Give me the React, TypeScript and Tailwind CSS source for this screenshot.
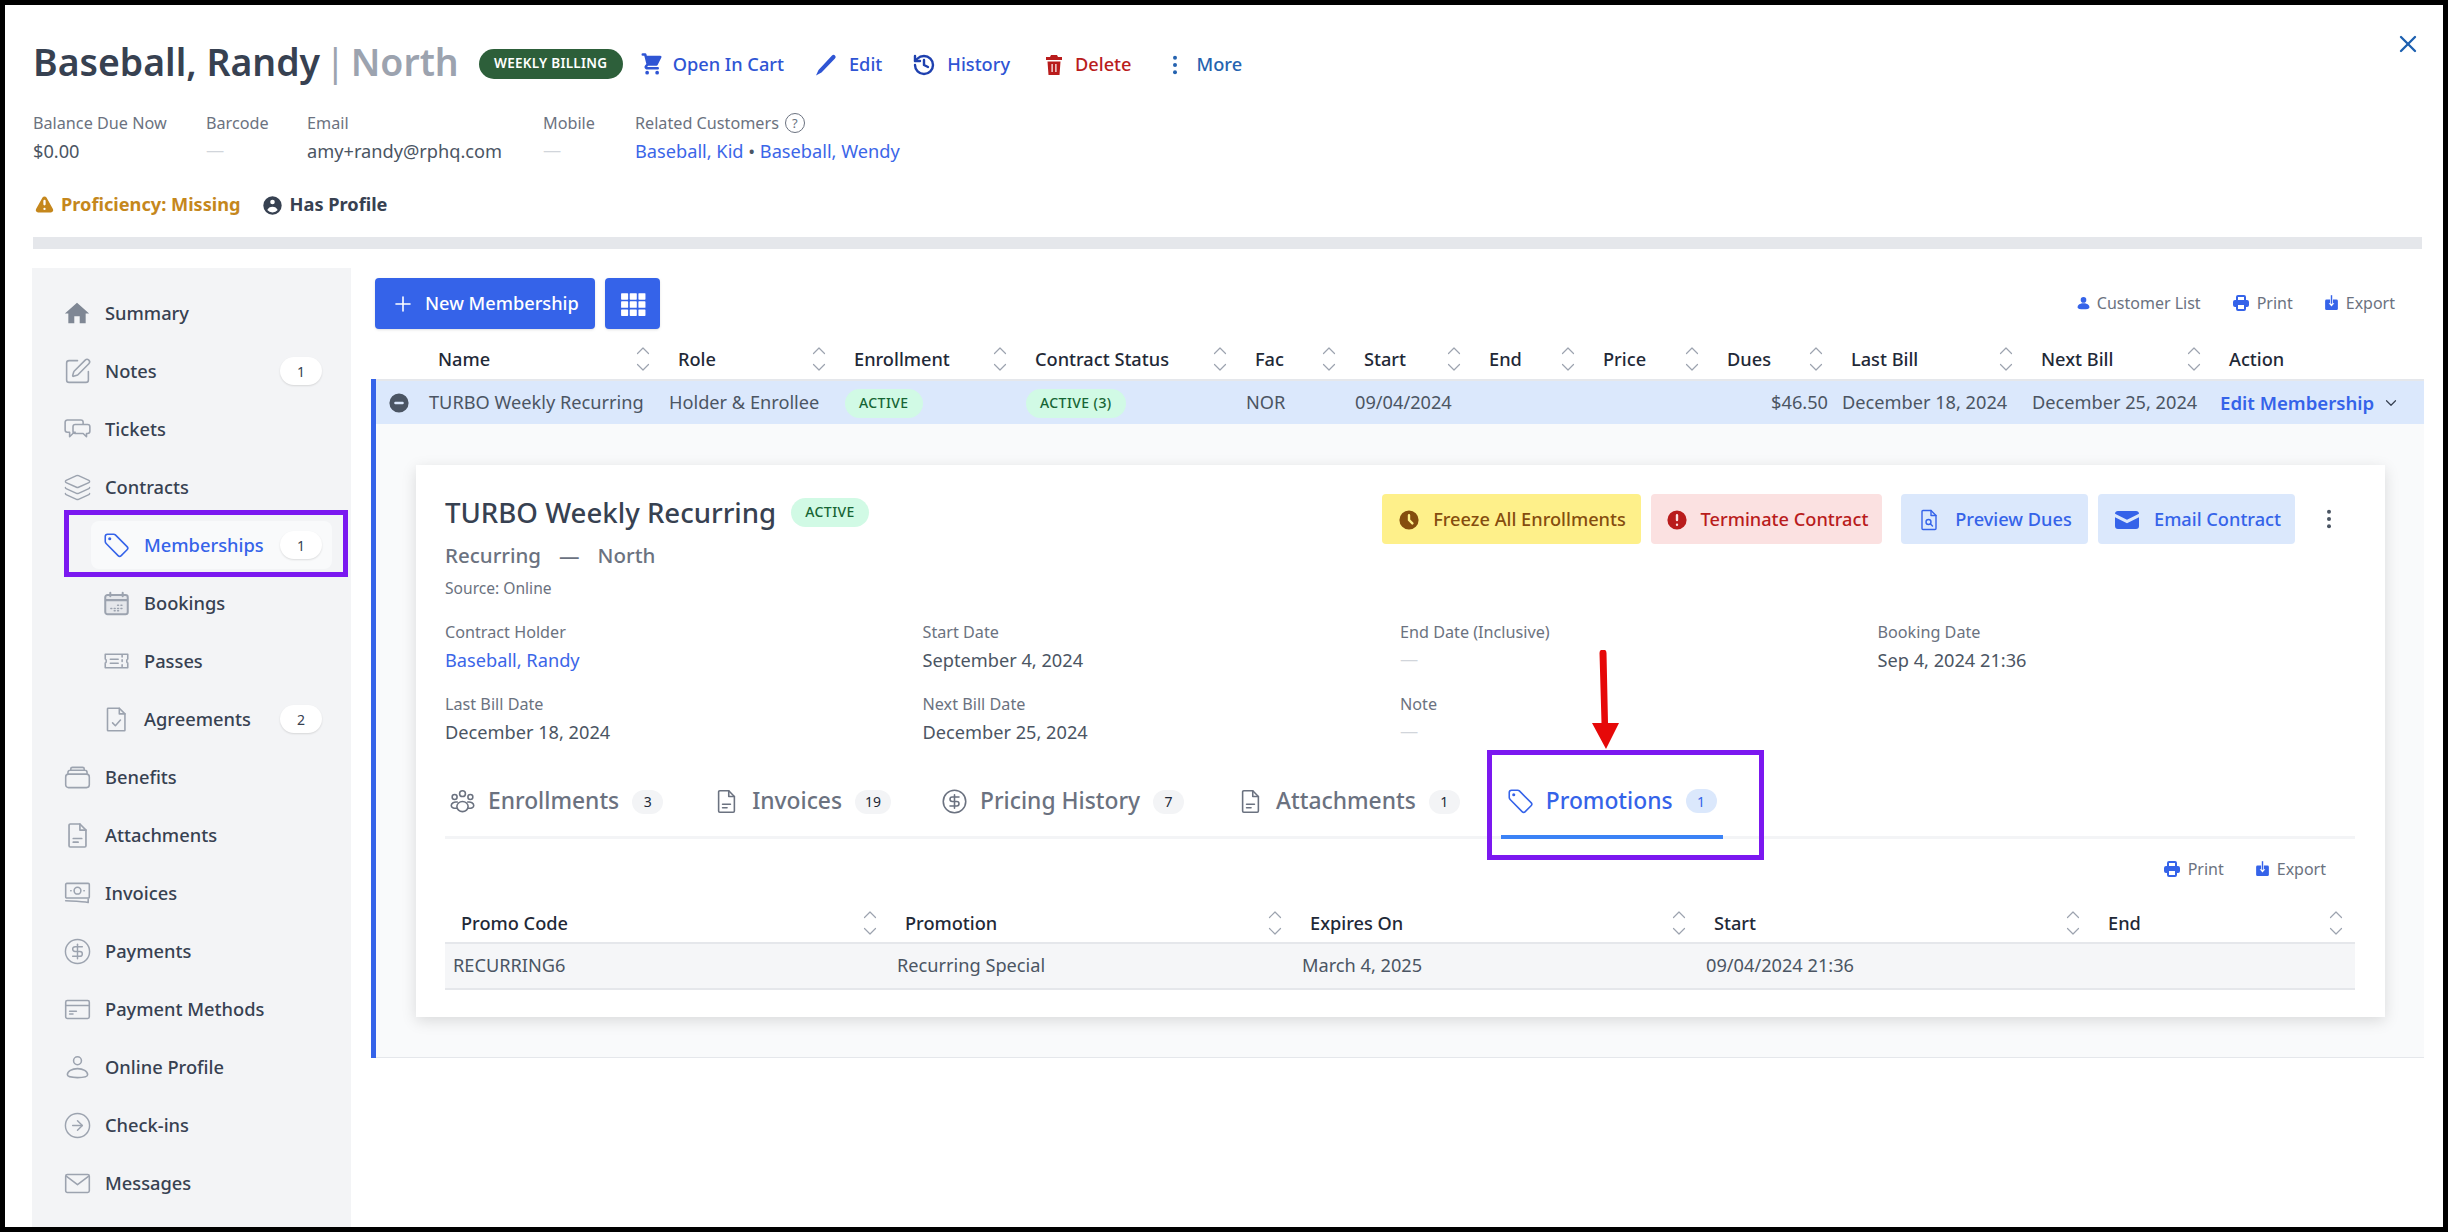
import React from "react";
import { HiShoppingCart, HiClock, HiExclamationCircle, HiMail, HiPrinter, HiExclamation, HiUserCircle, HiMinusCircle } from "react-icons/hi";
import { History, Plus, X, ChevronDown, SquarePen, Layers, CircleDollarSign, CircleArrowRight } from "lucide-react";

type IP = { children: React.ReactNode; className?: string; vb?: string };
const Ico = ({ children, className = "w-[27px] h-[27px]", vb = "0 0 24 24" }: IP) => (
  <svg viewBox={vb} fill="none" stroke="currentColor" strokeWidth={1.4} strokeLinecap="round" strokeLinejoin="round" className={className}>
    {children}
  </svg>
);

const TagIcon = ({ className }: { className?: string }) => (
  <Ico className={className}>
    <path d="M4 2h5.500c.6 0 1.100.2 1.500.6l10.400 10.400c.8.8.8 2 0 2.800l-5.200 5.200c-.8.8-2 .8-2.800 0L3 10.500c-.6-.6-1-1.300-1-2V4a2 2 0 0 1 2-2z" />
    <circle cx="6" cy="6" r=".7" fill="currentColor" />
  </Ico>
);
const FileLines = ({ className }: { className?: string }) => (
  <Ico className={className}>
    <path d="M6 2.500h8l5 5v13a1 1 0 0 1-1 1H6a1 1 0 0 1-1-1v-17a1 1 0 0 1 1-1z" />
    <path d="M14 2.500v5h5M8.500 14.500h7M8.500 17.500h4" />
  </Ico>
);
const Users3 = ({ className }: { className?: string }) => (
  <Ico className={className}>
    <circle cx="12" cy="5" r="2.600" />
    <circle cx="5" cy="8" r="2.200" />
    <circle cx="19" cy="8" r="2.200" />
    <ellipse cx="12" cy="16.500" rx="5" ry="4.500" />
    <path d="M7.300 12.500C4.500 12 2 13.500 2 15.500c0 1.800 2 2.800 5 2.500M16.700 12.500c2.800-.5 5.300 1 5.300 3 0 1.800-2 2.800-5 2.500" />
  </Ico>
);
const ExportIcon = ({ className }: { className?: string }) => (
  <svg viewBox="0 0 24 24" className={className} fill="currentColor">
    <path d="M5 7h5v5.500H8l4 4.500 4-4.500h-2V7h5a2 2 0 0 1 2 2v11a2 2 0 0 1-2 2H5a2 2 0 0 1-2-2V9a2 2 0 0 1 2-2z" />
    <rect x="11" y="1" width="2" height="12" />
  </svg>
);
const PersonIcon = ({ className }: { className?: string }) => (
  <svg viewBox="0 0 24 24" className={className} fill="currentColor">
    <circle cx="12" cy="7" r="4.500" />
    <path d="M2.500 19c0-4 4-6.500 9.500-6.500s9.500 2.500 9.500 6.500c0 2-4 3-9.500 3s-9.500-1-9.500-3z" />
  </svg>
);
const Sort = () => (
  <svg viewBox="0 0 16 26" className="w-[16px] h-[26px] shrink-0 text-[#9ca3af]" fill="none" stroke="currentColor" strokeWidth="1.200" strokeLinecap="round" strokeLinejoin="round">
    <path d="M2.500 7.500L8 2l5.500 5.500M2.500 18.500L8 24l5.500-5.500" />
  </svg>
);

const big = "w-[29px] h-[29px]";
const sideIcons: Record<string, React.ReactNode> = {
  Summary: (
    <svg viewBox="0 0 24 24" className="w-[26px] h-[26px]" fill="currentColor">
      <path d="M12 2.500L.8 12.500H4V21.500h5.500V15h5v6.500H20V12.500h3.200z" />
    </svg>
  ),
  Notes: <SquarePen className={big} strokeWidth={1.3} />,
  Tickets: (
    <Ico>
      <path d="M3 3.500h12a2 2 0 0 1 2 2v1.500M3 3.500a2 2 0 0 0-2 2v7a2 2 0 0 0 2 2h2v4l4-4h1" />
      <path d="M10 7.500h11a2 2 0 0 1 2 2v4a2 2 0 0 1-2 2h-1v3l-3-3h-7a2 2 0 0 1-2-2v-4a2 2 0 0 1 2-2z" />
    </Ico>
  ),
  Contracts: <Layers className={big} strokeWidth={1.2} />,
  Memberships: <TagIcon className="w-[27px] h-[27px]" />,
  Bookings: (
    <Ico>
      <rect x="2" y="4.500" width="20" height="17" rx="2" fill="#e5e7eb" strokeWidth={1.8} />
      <path d="M2.500 9h19M6.500 2.500v3M17.500 2.500v3" strokeWidth={1.8} />
      <path d="M7 16.500h.8M10 16.500h.8M13 16.500h.8M16 16.500h.8M13 13.500h.8M16 13.500h.8M10 18.500h.8M13 18.500h.8" />
    </Ico>
  ),
  Passes: (
    <Ico>
      <path d="M2 5.500h20v4.200c-1.200.3-1.200 3.300 0 3.600v4.200H2v-4.200c1.200-.3 1.200-3.300 0-3.600z" />
      <path d="M6.500 10h7M6.500 13.500h7M17 6.500v1.500M17 10.500v1.500M17 15v1.500" />
    </Ico>
  ),
  Agreements: (
    <Ico>
      <path d="M4.500 2h10l5 5v14.500a.5.500 0 0 1-.5.500H4.500a.5.500 0 0 1-.5-.5v-19a.5.500 0 0 1 .5-.5z" />
      <path d="M14.500 2v5h5M8.500 15l2.500 2.500 4.500-5" />
    </Ico>
  ),
  Benefits: (
    <Ico>
      <rect x="1.500" y="9" width="21" height="12" rx="2.500" />
      <path d="M3.500 9V7.500a2 2 0 0 1 2-2h13a2 2 0 0 1 2 2V9M6 5.500V4.500a1.500 1.500 0 0 1 1.500-1.500h9a1.500 1.500 0 0 1 1.500 1.500v1" />
    </Ico>
  ),
  Attachments: <FileLines className={big} />,
  Invoices: (
    <Ico>
      <rect x="1.500" y="3" width="21" height="13" rx="1" />
      <circle cx="12" cy="9.500" r="3" />
      <path d="M6 9.500h.3M17.700 9.500h.3M1.500 18.500c5 .3 15 .5 20 1.500v-3" />
    </Ico>
  ),
  Payments: <CircleDollarSign className={big} strokeWidth={1.2} />,
  "Payment Methods": (
    <Ico>
      <rect x="1.500" y="4" width="21" height="16" rx="1.500" />
      <path d="M1.500 8.500h21M5 13.500h6M5 16h3" />
    </Ico>
  ),
  "Online Profile": (
    <Ico>
      <circle cx="12" cy="6" r="3.500" />
      <path d="M3 18.500c0-3 4-5.500 9-5.500s9 2.500 9 5.500c0 1.500-4 2.500-9 2.500s-9-1-9-2.500z" />
    </Ico>
  ),
  "Check-ins": <CircleArrowRight className={big} strokeWidth={1.2} />,
  Messages: (
    <Ico>
      <rect x="1.500" y="4" width="21" height="16" rx="1.500" />
      <path d="M2 5.500l10 7.500 10-7.500" />
    </Ico>
  ),
};

const sideItems: { label: string; sub?: boolean; badge?: string; active?: boolean }[] = [
  { label: "Summary" },
  { label: "Notes", badge: "1" },
  { label: "Tickets" },
  { label: "Contracts" },
  { label: "Memberships", sub: true, badge: "1", active: true },
  { label: "Bookings", sub: true },
  { label: "Passes", sub: true },
  { label: "Agreements", sub: true, badge: "2" },
  { label: "Benefits" },
  { label: "Attachments" },
  { label: "Invoices" },
  { label: "Payments" },
  { label: "Payment Methods" },
  { label: "Online Profile" },
  { label: "Check-ins" },
  { label: "Messages" },
];

const Pill = ({ children }: { children: React.ReactNode }) => (
  <span className="h-[29px] px-[14px] inline-flex items-center rounded-full bg-[#d1fae5] text-[#166534] text-[14px] font-medium tracking-[0.03em] uppercase leading-none whitespace-nowrap">{children}</span>
);

const Field = ({ label, value, link, dash }: { label: string; value?: string; link?: boolean; dash?: boolean }) => (
  <div>
    <div className="text-[16.2px] leading-[24px] text-[#6b7280]">{label}</div>
    {dash ? (
      <div className="mt-[2px] h-[28px] flex items-center text-[#d1d5db] text-[18.2px]">—</div>
    ) : (
      <div className={"mt-[2px] text-[18.2px] leading-[28px] " + (link ? "text-[#3b66e8]" : "text-[#4b5563]")}>{value}</div>
    )}
  </div>
);

const ListAction = ({ icon, label }: { icon: React.ReactNode; label: string }) => (
  <span className="flex items-center gap-[6px] text-[16px] text-[#6b7280]">
    <span className="text-[#3563e9]">{icon}</span>
    {label}
  </span>
);

const mainCols = "grid grid-cols-[53px_240px_176px_181px_220px_109px_125px_114px_124px_124px_190px_188px_1fr]";
const headers = ["Name", "Role", "Enrollment", "Contract Status", "Fac", "Start", "End", "Price", "Dues", "Last Bill", "Next Bill"];

const tabs = [
  { label: "Enrollments", n: "3", icon: <Users3 className="w-[27px] h-[27px]" /> },
  { label: "Invoices", n: "19", icon: <FileLines className="w-[27px] h-[27px]" /> },
  { label: "Pricing History", n: "7", icon: <CircleDollarSign className="w-[27px] h-[27px]" strokeWidth={1.4} /> },
  { label: "Attachments", n: "1", icon: <FileLines className="w-[27px] h-[27px]" /> },
  { label: "Promotions", n: "1", active: true, icon: <TagIcon className="w-[27px] h-[27px]" /> },
];

export default function App() {
  return (
    <div className="relative w-[2448px] h-[1232px] overflow-hidden border-[5px] border-black bg-white font-['Noto_Sans',sans-serif]">
      {/* Header */}
      <div className="pt-[32px] pl-[28px] pr-[21px]">
        <div className="flex items-center h-[50px]">
          <h1 className="text-[37.4px] leading-[50px] font-semibold text-[#374151] whitespace-nowrap">
            <span>Baseball, Randy</span>
            <span className="inline-block ml-[5px] mr-[5px] font-normal text-[#9ca3af]">|</span>
            <span className="text-[#9ca3af]">North</span>
          </h1>
          <span className="ml-[20px] mt-[3px] h-[30px] w-[144px] flex items-center justify-center rounded-full bg-[#2d5f3a] text-white text-[13.5px] font-semibold tracking-[0.02em] uppercase">Weekly Billing</span>
          <div className="ml-[16px] mt-[6px] flex items-center text-[18.2px] font-medium">
            <span className="flex items-center gap-[9px] text-[#2f55d4]"><HiShoppingCart className="w-[25px] h-[25px]" />Open In Cart</span>
            <span className="ml-[30px] flex items-center gap-[11px] text-[#2f55d4]">
              <svg viewBox="0 0 24 24" className="w-[24px] h-[24px]" fill="currentColor"><path d="M18 2.500a2 2 0 0 1 3 3L7.500 19.500 2 22.500l2.500-5.500z" /></svg>
              Edit
            </span>
            <span className="ml-[30px] flex items-center gap-[11px] text-[#2f55d4]"><History className="w-[24px] h-[24px] text-[#1e40af]" strokeWidth={2.4} />History</span>
            <span className="ml-[32px] flex items-center gap-[9px] text-[#b91c1c]">
              <svg viewBox="0 0 24 24" className="w-[24px] h-[24px]" fill="currentColor" fillRule="evenodd"><path d="M9 2h6l1 2h4v3H4V4h4zM5.500 8.500h13L17.500 22h-11zM9.500 11v8h1.200v-8zM13.300 11v8h1.200v-8z" /></svg>
              Delete
            </span>
            <span className="ml-[40px] flex items-center gap-[19px] text-[#2563b0]">
              <svg viewBox="0 0 6 22" className="w-[6px] h-[20px]" fill="currentColor"><circle cx="3" cy="3" r="2.200" /><circle cx="3" cy="11" r="2.200" /><circle cx="3" cy="19" r="2.200" /></svg>
              More
            </span>
          </div>
          <X className="ml-auto w-[28px] h-[28px] text-[#1d60b0] -mt-[36px]" strokeWidth={2} />
        </div>
        <div className="mt-[24px] flex">
          <div className="w-[173px]"><Field label="Balance Due Now" value="$0.00" /></div>
          <div className="w-[101px]"><Field label="Barcode" dash /></div>
          <div className="w-[236px]"><Field label="Email" value="amy+randy@rphq.com" /></div>
          <div className="w-[92px]"><Field label="Mobile" dash /></div>
          <div>
            <div className="flex items-center gap-[6px] text-[16.2px] leading-[24px] text-[#6b7280]">
              Related Customers
              <span className="w-[20px] h-[20px] rounded-full border border-[#6b7280] flex items-center justify-center text-[13px] leading-none">?</span>
            </div>
            <div className="mt-[2px] text-[18.2px] leading-[28px] text-[#3b66e8]">Baseball, Kid <span className="text-[#4b5563]">•</span> Baseball, Wendy</div>
          </div>
        </div>
        <div className="mt-[28px] h-[24px] flex items-center text-[18.2px] font-bold">
          <span className="flex items-center gap-[5px] text-[#c5871c]"><HiExclamation className="w-[23px] h-[23px]" />Proficiency: Missing</span>
          <span className="ml-[20px] flex items-center gap-[6px] text-[#374151]"><HiUserCircle className="w-[23px] h-[23px]" />Has Profile</span>
        </div>
        <div className="mt-[20px] h-[12px] bg-[#e5e7eb]" />
      </div>

      {/* Body */}
      <div className="mt-[19px] pl-[27px] pr-[21px] flex">
        <aside className="w-[319px] h-[1000px] shrink-0 bg-[#f3f4f6] pt-[16px]">
          {sideItems.map((it) => (
            <div key={it.label} className={"h-[58px] flex items-center " + (it.sub ? "pl-[59px]" : "pl-[27px]")}>
              <div className={"h-[48px] flex items-center rounded-[8px] " + (it.sub ? "w-[241px] pl-[10px] pr-[10px] " : "w-[263px] pl-[3px] ") + (it.active ? "bg-[#f9fafb]" : "")}>
                <span className={"w-[30px] flex justify-center " + (it.active ? "text-[#3563e9]" : it.label === "Summary" ? "text-[#7f8794]" : "text-[#9ca3af]")}>{sideIcons[it.label]}</span>
                <span className={"ml-[13px] text-[18.3px] font-medium whitespace-nowrap " + (it.active ? "text-[#3563e9]" : "text-[#374151]")}>{it.label}</span>
                {it.badge && (
                  <span className="ml-auto w-[42px] h-[28px] rounded-full bg-white shadow-[0_1px_2px_rgba(0,0,0,0.12)] flex items-center justify-center text-[14px] text-[#374151]">{it.badge}</span>
                )}
              </div>
            </div>
          ))}
        </aside>

        <main className="ml-[20px] flex-1 pt-[10px]">
          <div className="flex items-center pl-[4px]">
            <button className="h-[51px] w-[220px] flex items-center pl-[16px] gap-[10px] rounded-[4px] bg-[#3563e9] text-white text-[18.2px] font-medium shadow-sm whitespace-nowrap">
              <Plus className="w-[24px] h-[24px]" strokeWidth={1.6} />New Membership
            </button>
            <button className="ml-[10px] h-[51px] w-[55px] flex items-center justify-center rounded-[4px] bg-[#3563e9] shadow-sm">
              <svg viewBox="0 0 24 24" className="w-[26px] h-[26px]" fill="white">
                {[1, 9, 17].map((x) => [2, 9.500, 17].map((y) => <rect key={x + "-" + y} x={x} y={y} width="6.500" height="6" rx=".6" />))}
              </svg>
            </button>
            <div className="ml-auto mr-[29px] -mt-[2px] flex items-center">
              <ListAction icon={<PersonIcon className="w-[15px] h-[18px]" />} label="Customer List" />
              <span className="ml-[30px]"><ListAction icon={<HiPrinter className="w-[20px] h-[20px]" />} label="Print" /></span>
              <span className="ml-[30px]"><ListAction icon={<ExportIcon className="w-[17px] h-[20px]" />} label="Export" /></span>
            </div>
          </div>

          {/* Table header */}
          <div className={mainCols + " mt-[11px] pl-[5px] h-[39px] items-center"}>
            <div />
            {headers.map((h) => (
              <div key={h} className="flex items-center justify-between pl-[9px] pr-[18px] text-[18.2px] font-medium text-[#1f2937] whitespace-nowrap">
                <span>{h}</span>
                <Sort />
              </div>
            ))}
            <div className="pl-[9px] text-[18.2px] font-medium text-[#1f2937]">Action</div>
          </div>

          <div className="border-l-[5px] border-[#3563e9] bg-[#f9fafb]">
            <div className={mainCols + " h-[45px] pt-[1px] items-center bg-[#dbe8fc] border-t-2 border-[#e5e7eb] text-[18.2px] text-[#4b5563] whitespace-nowrap"}>
              <div className="pl-[11px]"><HiMinusCircle className="w-[24px] h-[24px] text-[#4b5563]" /></div>
              <div>TURBO Weekly Recurring</div>
              <div>Holder &amp; Enrollee</div>
              <div><Pill>Active</Pill></div>
              <div><Pill>Active (3)</Pill></div>
              <div>NOR</div>
              <div>09/04/2024</div>
              <div />
              <div />
              <div className="text-right pr-[14px]">$46.50</div>
              <div>December 18, 2024</div>
              <div>December 25, 2024</div>
              <div className="flex items-center gap-[8px] text-[18.6px] font-semibold text-[#3563e9]">Edit Membership<ChevronDown className="w-[18px] h-[18px] text-[#374151]" strokeWidth={1.6} /></div>
            </div>

            {/* Expanded */}
            <div className="pt-[41px] pb-[40px] pl-[40px] pr-[39px] border-b border-[#e5e7eb]">
              <div className="bg-white shadow-[0_4px_14px_rgba(0,0,0,0.13)] pt-[29px] pl-[29px] pr-[30px] h-[552px]">
                <div className="flex justify-between">
                  <div>
                    <div className="flex items-center h-[44px] -mt-[3px]">
                      <span className="text-[27.6px] font-medium text-[#374151] whitespace-nowrap">TURBO Weekly Recurring</span>
                      <span className="ml-[15px] mt-[-2px]"><Pill>Active</Pill></span>
                    </div>
                    <div className="mt-[6px] text-[20.5px] leading-[28px] font-medium text-[#6b7280]">Recurring<span className="mx-[18px]">—</span>North</div>
                    <div className="mt-[9px] text-[15.6px] leading-[20px] text-[#6b7280]">Source: Online</div>
                  </div>
                  <div className="flex items-start text-[18.2px] font-medium mr-[23px] whitespace-nowrap">
                    <span className="h-[50px] pt-[1px] w-[259px] flex items-center justify-center gap-[12px] rounded-[4px] bg-[#fef08a] text-[#854d0e]"><HiClock className="w-[24px] h-[24px]" />Freeze All Enrollments</span>
                    <span className="ml-[10px] h-[50px] pt-[1px] w-[231px] flex items-center justify-center gap-[12px] rounded-[4px] bg-[#fbe1e1] text-[#b91c1c]"><HiExclamationCircle className="w-[24px] h-[24px]" />Terminate Contract</span>
                    <span className="ml-[19px] h-[50px] pt-[1px] w-[187px] flex items-center justify-center gap-[14px] rounded-[4px] bg-[#dbe8fc] text-[#3563e9]">
                      <Ico className="w-[24px] h-[28px]"><path d="M6 2.500h8l5 5v13a1 1 0 0 1-1 1H6a1 1 0 0 1-1-1v-17a1 1 0 0 1 1-1z" /><path d="M14 2.500v5h5" /><circle cx="11.500" cy="14" r="2.500" /><path d="M13.500 16l2 2" /></Ico>
                      Preview Dues
                    </span>
                    <span className="ml-[10px] h-[50px] pt-[1px] w-[197px] flex items-center justify-center gap-[12px] rounded-[4px] bg-[#dbe8fc] text-[#3563e9]"><HiMail className="w-[30px] h-[30px]" />Email Contract</span>
                    <svg viewBox="0 0 6 22" className="ml-[31px] mt-[15px] w-[6px] h-[20px] text-[#4b5563]" fill="currentColor"><circle cx="3" cy="3" r="2.200" /><circle cx="3" cy="11" r="2.200" /><circle cx="3" cy="19" r="2.200" /></svg>
                  </div>
                </div>

                <div className="mt-[22px] grid grid-cols-4 gap-y-[18px] w-[1910px]">
                  <Field label="Contract Holder" value="Baseball, Randy" link />
                  <Field label="Start Date" value="September 4, 2024" />
                  <Field label="End Date (Inclusive)" dash />
                  <Field label="Booking Date" value="Sep 4, 2024 21:36" />
                  <Field label="Last Bill Date" value="December 18, 2024" />
                  <Field label="Next Bill Date" value="December 25, 2024" />
                  <Field label="Note" dash />
                </div>

                {/* Tabs */}
                <div className="mt-[21px] h-[72px] flex gap-[38px] border-b-[3px] border-[#f3f4f6]">
                  {tabs.map((t, i) => (
                    <div key={t.label} className={"h-[72px] flex items-center pr-[6px] gap-[12px] " + (i === 0 ? "pl-[4px] " : "pl-[6px] ") + (i === 3 ? "ml-[3px] " : i === 4 ? "-ml-[3px] " : "") + (t.active ? "border-b-4 border-[#3b82f6] text-[#3563e9]" : "pb-[3px] text-[#6b7280]")}>
                      {t.icon}
                      <span className="text-[22.8px] font-medium whitespace-nowrap">{t.label}</span>
                      <span className={"ml-[1px] h-[24px] min-w-[31px] px-[10px] rounded-full flex items-center justify-center text-[14px] " + (t.active ? "bg-[#dbe8fc] text-[#3563e9]" : "bg-[#f3f4f6] text-[#1f2937]")}>{t.n}</span>
                    </div>
                  ))}
                </div>

                <div className="mt-[18px] flex justify-end pr-[29px] h-[24px] items-center">
                  <ListAction icon={<HiPrinter className="w-[20px] h-[20px]" />} label="Print" />
                  <span className="ml-[30px]"><ListAction icon={<ExportIcon className="w-[17px] h-[20px]" />} label="Export" /></span>
                </div>

                {/* Promotions table */}
                <div className="mt-[24px] grid grid-cols-[444px_405px_404px_394px_1fr] h-[39px] items-center border-b-2 border-[#e5e7eb]">
                  {["Promo Code", "Promotion", "Expires On", "Start", "End"].map((h) => (
                    <div key={h} className="flex items-center justify-between pl-[16px] pr-[11px] text-[18.2px] font-medium text-[#1f2937]">
                      <span>{h}</span>
                      <Sort />
                    </div>
                  ))}
                </div>
                <div className="grid grid-cols-[444px_405px_404px_394px_1fr] h-[46px] items-center bg-[#f5f6f8] border-b-2 border-[#e5e7eb] text-[18.2px] text-[#4b5563]">
                  <div className="pl-[8px]">RECURRING6</div>
                  <div className="pl-[8px]">Recurring Special</div>
                  <div className="pl-[8px]">March 4, 2025</div>
                  <div className="pl-[8px]">09/04/2024 21:36</div>
                  <div />
                </div>
              </div>
            </div>
          </div>
        </main>
      </div>

      {/* Annotations */}
      <div className="absolute left-[59px] top-[505px] w-[284px] h-[67px] border-[5px] border-[#7b18f0]" />
      <div className="absolute left-[1482px] top-[745px] w-[277px] h-[110px] border-[5px] border-[#7b18f0]" />
      <svg viewBox="0 0 32 100" className="absolute left-[1585px] top-[645px] w-[32px] h-[100px]" fill="#e60909">
        <path d="M9.500 3a3.500 3.500 0 0 1 7 0l1.500 70h11L16 99 2 73h9.500z" />
      </svg>
    </div>
  );
}
